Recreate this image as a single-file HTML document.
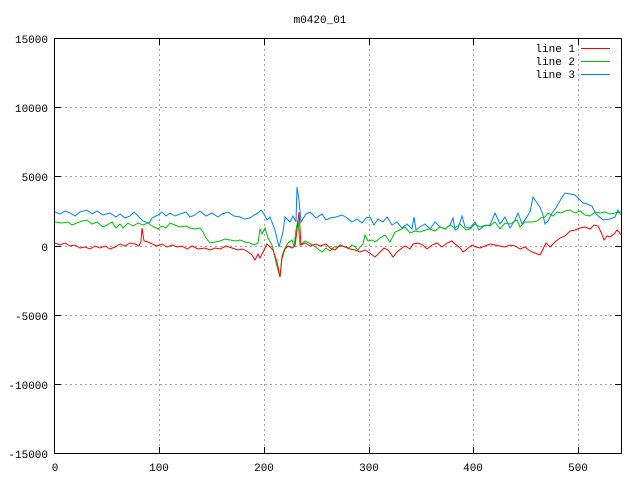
<!DOCTYPE html>
<html><head><style>
html,body{margin:0;padding:0;background:#fff;}
svg{display:block;font-family:"Liberation Mono","DejaVu Sans Mono",monospace;font-size:11px;}
</style></head><body>
<svg width="640" height="480" viewBox="0 0 640 480" xmlns="http://www.w3.org/2000/svg">
<text x="320" y="23" text-anchor="middle">m0420_01</text>
<g stroke="#a0a0a0" stroke-dasharray="2,3" stroke-width="1" fill="none">
<path d="M159.5 39V453M264.5 39V453M369.5 39V453M473.5 39V453M578.5 39V453"/>
<path d="M55 107.5H621M55 176.5H621M55 246.5H621M55 315.5H621M55 384.5H621"/>
</g>
<g stroke="#000" stroke-width="1" fill="none">
<rect x="54.5" y="38.5" width="567" height="415"/>
<path d="M55 107.5h6M55 176.5h6M55 246.5h6M55 315.5h6M55 384.5h6M621 107.5h-6M621 176.5h-6M621 246.5h-6M621 315.5h-6M621 384.5h-6"/>
<path d="M159.5 453v-6M264.5 453v-6M369.5 453v-6M473.5 453v-6M578.5 453v-6M159.5 39v6M264.5 39v6M369.5 39v6M473.5 39v6M578.5 39v6"/>
</g>
<g text-anchor="end">
<text x="48" y="43">15000</text><text x="48" y="112">10000</text><text x="48" y="181">5000</text>
<text x="48" y="251">0</text><text x="48" y="320">-5000</text><text x="48" y="389">-10000</text><text x="48" y="458">-15000</text>
</g>
<g text-anchor="middle">
<text x="55" y="471">0</text><text x="159" y="471">100</text><text x="264" y="471">200</text><text x="369" y="471">300</text><text x="473" y="471">400</text><text x="578" y="471">500</text>
</g>
<g text-anchor="end">
<text x="575" y="52">line 1</text><text x="575" y="65">line 2</text><text x="575" y="78">line 3</text>
</g>
<path d="M581 48.5h29" stroke="#ff0000"/>
<path d="M581 61.5h29" stroke="#00c000"/>
<path d="M581 74.5h29" stroke="#0080ff"/>
<g fill="none" stroke-width="1">
<polyline stroke="#0080ff" points="55,212 60,214 65,211 70,213 75,216 80,212 87,210 92,214 97,211 103,215 110,213 116,217 120,214 125,218 130,216 134,212 138,216 143,221 149,223 152,218 158,215 162,212 166,216 170,213 175,216 180,214 186,212 190,217 195,215 200,211 206,216 212,213 218,217 222,214 228,212 234,216 240,217 244,219 250,218 254,215 258,213 261,210 264,214 267,220 270,217 275,230 279,247 283,232 285,217 290,222 293,216 296,222 297,187 299,200 301,222 306,214 310,212 316,218 322,214 326,220 330,218 336,217 342,215 347,218 352,222 357,219 362,223 366,218 370,217 374,225 378,219 383,222 387,217 392,225 397,222 402,228 407,224 412,229 414,217 416,230 420,227 425,224 430,229 435,222 440,227 445,229 450,225 453,218 455,230 458,228 462,216 465,227 470,228 475,222 479,230 484,226 490,225 495,213 500,224 505,217 510,228 515,220 518,213 522,224 526,218 530,212 533,197 537,203 540,207 543,215 545,224 548,221 552,213 556,208 561,199 565,193 570,194 575,195 580,200 583,203 587,204 592,206 594,210 596,214 603,220 610,219 615,217 618,210 621,215"/>
<polyline stroke="#00c000" points="55,222 62,223 68,222 72,225 77,223 82,221 87,220 92,224 97,222 103,227 107,225 112,222 116,228 120,224 123,228 128,223 133,226 138,223 143,225 148,223 152,226 158,229 162,226 166,228 170,223 175,225 180,227 186,226 190,228 195,229 200,228 203,232 206,238 210,243 215,242 220,241 225,239 230,240 236,241 240,240 245,242 250,243 254,245 258,243 260,229 262,234 265,228 268,238 272,245 275,258 278,270 280,277 282,256 285,248 288,243 292,240 294,247 296,230 298,220 300,245 305,241 309,243 313,245 318,249 322,252 326,248 330,251 334,247 338,247 342,246 346,247 349,248 352,245 355,247 358,250 360,247 363,244 365,235 368,241 372,240 375,242 380,238 385,235 390,242 395,232 400,230 405,227 410,233 415,231 420,232 425,230 430,229 435,231 440,227 445,229 450,225 455,228 460,224 466,230 470,229 475,224 480,227 486,225 490,226 495,222 500,229 505,223 510,224 517,220 520,227 525,222 532,222 537,221 541,218 545,217 548,213 553,216 557,212 561,213 565,211 570,210 575,213 580,211 585,215 590,216 595,212 600,213 605,212 610,214 615,213 621,212"/>
<polyline stroke="#ff0000" points="55,243 60,245 65,243 70,246 75,245 80,248 85,247 90,249 95,246 100,248 105,246 110,249 115,247 120,244 125,246 130,243 135,244 139,246 141,241 142,228 144,241 148,242 152,244 157,246 162,244 167,247 172,245 177,247 182,246 187,249 192,246 198,249 205,248 210,250 215,248 220,249 226,246 232,248 238,250 243,249 248,252 252,255 255,260 258,254 260,258 263,252 265,248 267,244 270,247 273,250 277,262 280,277 282,258 285,249 288,246 292,248 295,246 297,230 299,212 301,245 305,243 310,246 316,244 320,246 326,244 330,248 335,250 340,245 345,247 350,249 355,250 360,252 365,250 368,252 371,254 375,257 380,252 384,248 388,250 393,257 397,252 402,248 405,246 410,249 413,244 418,243 423,245 427,249 432,245 437,243 442,247 447,243 452,241 455,244 460,248 463,252 467,249 472,245 476,247 480,248 485,246 490,244 495,245 500,246 505,247 510,245 515,246 520,249 525,247 530,251 535,253 540,255 543,249 546,243 550,247 555,242 560,238 565,236 570,231 575,230 580,228 585,227 590,229 594,225 598,226 601,232 604,240 607,236 610,237 614,234 617,230 619,232 621,235"/>
</g>
</svg>
</body></html>
